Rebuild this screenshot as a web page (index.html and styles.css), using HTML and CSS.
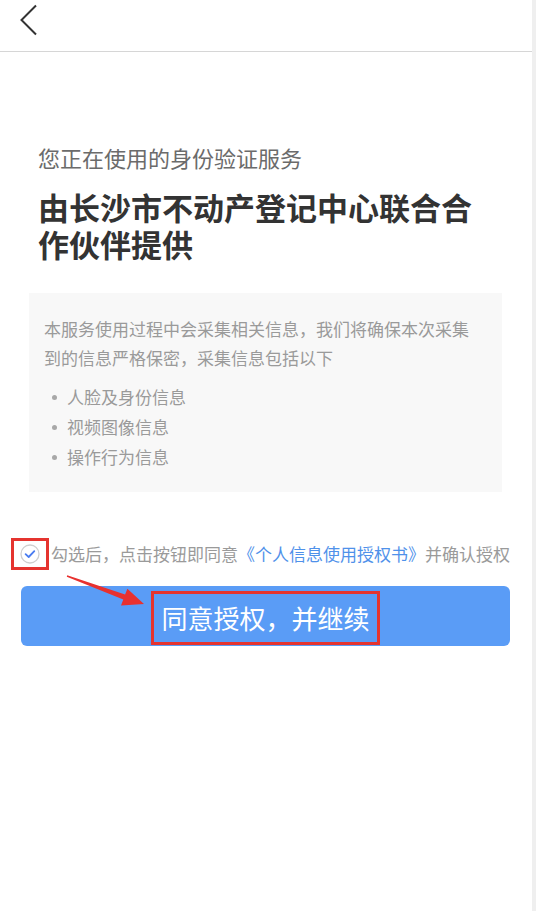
FILE: index.html
```html
<!DOCTYPE html>
<html lang="zh-CN">
<head>
<meta charset="utf-8">
<title>身份验证服务</title>
<link rel="stylesheet" href="styles.css">
</head>
<body>
<div class="screen">
  <div class="main">
    <header class="topbar">
      <svg class="back" width="18" height="32" viewBox="0 0 18 32">
        <path d="M16 1.5 L1.5 16 L16 30.5" fill="none" stroke="#333" stroke-width="2"/>
      </svg>
    </header>

    <section class="intro">
      <p class="sub">您正在使用的身份验证服务</p>
      <h1 class="title">由长沙市不动产登记中心联合合作伙伴提供</h1>
    </section>

    <section class="notice">
      <p class="notice-text">本服务使用过程中会采集相关信息，我们将确保本次采集到的信息严格保密，采集信息包括以下</p>
      <ul class="notice-list">
        <li>人脸及身份信息</li>
        <li>视频图像信息</li>
        <li>操作行为信息</li>
      </ul>
    </section>

    <section class="action">
      <div class="agree">
        <span class="check">
          <svg width="20" height="20" viewBox="0 0 20 20">
            <circle cx="10" cy="10" r="9" fill="#fff" stroke="#cfcfcf" stroke-width="1.3"/>
            <path d="M5.6 10.2 L8.7 13 L14.3 7.2" fill="none" stroke="#4a7cf0" stroke-width="1.8" stroke-linecap="round" stroke-linejoin="round"/>
          </svg>
          <span class="mark mark-check"></span>
        </span>
        <span class="agree-text">勾选后，点击按钮即同意<a class="link">《个人信息使用授权书》</a>并确认授权</span>
      </div>
      <button class="btn"><span class="btn-label">同意授权，并继续</span></button>
      <svg class="arrow" width="90" height="45" viewBox="0 0 90 45">
        <polygon points="7.2,6.3 65.1,25.6 67.4,19.8 84,35 61,36.4 63.3,30.6 6.8,7.7" fill="#e8312f"/>
      </svg>
    </section>
  </div>
  <div class="edge"></div>
</div>
</body>
</html>
```

FILE: styles.css
```css
html, body {
  margin: 0;
  padding: 0;
  background: #fff;
}

body {
  font-family: "Noto Sans CJK SC", "Noto Sans", "Liberation Sans", sans-serif;
}

.screen {
  display: flex;
  width: 536px;
  height: 911px;
  overflow: hidden;
}

.main {
  flex: 1;
  background: #fff;
}

.edge {
  width: 4px;
  background: #efefef;
}

.topbar {
  height: 51px;
  border-bottom: 1px solid #d6d6d6;
  padding-left: 20px;
  padding-top: 4px;
  box-sizing: border-box;
  height: 52px;
}

.back {
  display: block;
}

.intro {
  padding: 90px 0 0 38px;
}

.sub {
  margin: 0;
  font-size: 22px;
  line-height: 30px;
  color: #6b6b6b;
}

.title {
  margin: 16px 0 0;
  font-size: 31px;
  line-height: 37px;
  font-weight: 700;
  color: #333;
  width: 440px;
}

.notice {
  margin: 31px 30px 0 29px;
  background: #f8f8f8;
  padding: 21px 26px 20px 15px;
}

.notice-text {
  margin: 0;
  font-size: 17px;
  line-height: 29px;
  color: #9a9a9a;
}

.notice-list {
  margin: 10px 0 0;
  padding: 0 0 0 23px;
  list-style: none;
}

.notice-list li {
  position: relative;
  font-size: 17px;
  line-height: 30px;
  color: #9a9a9a;
}

.notice-list li::before {
  content: "";
  position: absolute;
  left: -15px;
  top: 13px;
  width: 5px;
  height: 5px;
  border-radius: 50%;
  background: #a8a8a8;
}

.action {
  position: relative;
  margin-top: 47px;
}

.agree {
  display: flex;
  align-items: center;
  height: 30px;
  padding-left: 20px;
}

.check {
  position: relative;
  display: flex;
  width: 20px;
  height: 20px;
}

.mark {
  position: absolute;
  border: 3px solid #e5342f;
  box-sizing: border-box;
}

.mark-check {
  left: -9px;
  top: -6px;
  width: 38px;
  height: 32px;
}

.agree-text {
  margin-left: 11px;
  font-size: 17px;
  line-height: 30px;
  color: #9a9a9a;
  white-space: nowrap;
}

.link {
  color: #4f91ea;
}

.btn {
  display: flex;
  align-items: center;
  justify-content: center;
  margin: 17px 0 0 21px;
  width: 489px;
  height: 60px;
  border: 0;
  border-radius: 6px;
  background: #5a9cf6;
  padding: 3px 0 0;
  font-family: inherit;
}

.btn-label {
  display: inline-block;
  border: 3px solid #e5342f;
  padding: 0 7px;
  font-size: 26px;
  line-height: 48px;
  color: #fff;
}

.arrow {
  position: absolute;
  left: 60px;
  top: 30px;
}
```
